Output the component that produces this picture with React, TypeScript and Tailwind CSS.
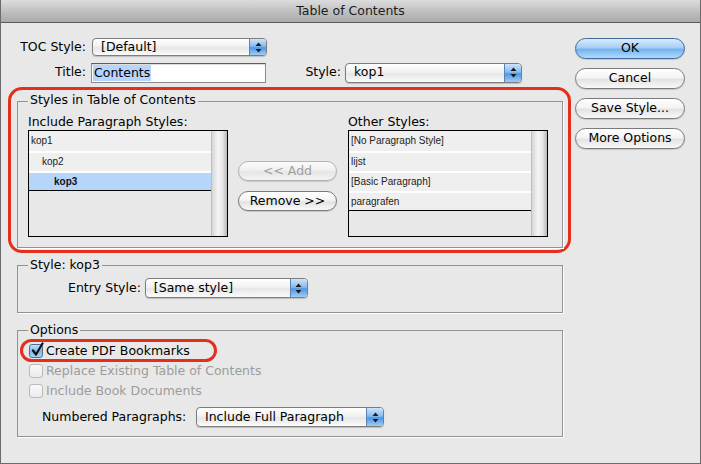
import React from "react";

function Arrows() {
  return (
    <svg width="7" height="11" viewBox="0 0 7 11">
      <path d="M3.5 0.5 L6.5 4 L0.5 4 Z" fill="#1b1b1b" />
      <path d="M3.5 10.5 L6.5 7 L0.5 7 Z" fill="#1b1b1b" />
    </svg>
  );
}

function Select({ className, text }: { className: string; text: string }) {
  return (
    <div
      className={`flex shrink-0 overflow-hidden rounded-[4px] border border-[#7d7d7d] bg-[linear-gradient(to_bottom,#ffffff,#f1f1f1_45%,#e6e6e6_55%,#fbfbfb)] shadow-[0_1px_1px_rgba(0,0,0,0.18)] ${className}`}
    >
      <div className="flex flex-1 items-center pl-[8px] text-[12.5px] leading-none text-black">{text}</div>
      <div className="flex w-[17px] items-center justify-center border-l border-[#5c82b4] bg-[linear-gradient(to_bottom,#cfe4fa,#86bbf0_45%,#4f97e4_55%,#9fcdf8)]">
        <Arrows />
      </div>
    </div>
  );
}

function AquaButton({
  children,
  primary,
  disabled,
  className,
}: {
  children: React.ReactNode;
  primary?: boolean;
  disabled?: boolean;
  className: string;
}) {
  const look = primary
    ? "border-[#3e6aa0] bg-[linear-gradient(to_bottom,#d8ebfc,#a6cff6_45%,#74b3ef_55%,#b2dafb)] text-black"
    : disabled
    ? "border-[#b3b3b3] bg-[linear-gradient(to_bottom,#fbfbfb,#f0f0f0_45%,#e6e6e6_55%,#f4f4f4)] text-[#a0a0a0]"
    : "border-[#7a7a7a] bg-[linear-gradient(to_bottom,#ffffff,#f4f4f4_45%,#e3e3e3_55%,#f8f8f8)] text-black";
  return (
    <div
      className={`flex items-center justify-center rounded-full border text-[12.5px] leading-none shadow-[0_1px_1px_rgba(0,0,0,0.15)] ${look} ${className}`}
    >
      {children}
    </div>
  );
}

function CheckBox({ checked, disabled }: { checked?: boolean; disabled?: boolean }) {
  if (checked) {
    return (
      <div className="relative h-[14px] w-[14px] shrink-0 rounded-[3px] border border-[#4f6f9a] bg-[linear-gradient(to_bottom,#c9e0f8,#7fb5ec_50%,#a9d1f7)]">
        <svg className="absolute left-[1px] top-[-3px]" width="13" height="15" viewBox="0 0 13 15">
          <path d="M2 8.5 L5 12.5 L11.5 1.5" fill="none" stroke="#111" strokeWidth="2.2" strokeLinecap="round" strokeLinejoin="round" />
        </svg>
      </div>
    );
  }
  return (
    <div
      className={`h-[14px] w-[14px] shrink-0 rounded-[3px] border ${
        disabled ? "border-[#bababa] bg-[linear-gradient(to_bottom,#f9f9f9,#ebebeb)]" : "border-[#8a8a8a] bg-white"
      }`}
    />
  );
}

function ListBox({
  items,
}: {
  items: { text: string; indent: string; selected?: boolean }[];
}) {
  return (
    <div className="flex h-[107px] w-[200px] border border-black">
      <div className="flex flex-1 flex-col">
        {items.map((it, i) => {
          const first = i === 0;
          const last = i === items.length - 1;
          return (
            <div
              key={it.text}
              className={`flex h-[20px] shrink-0 items-center text-[10px] leading-none font-['Liberation_Sans',sans-serif] ${it.indent} ${
                first ? "" : "border-t-2 border-t-white"
              } ${last ? "border-b border-b-black" : ""} ${
                it.selected ? "bg-[#b6d5fb] font-bold text-[#111]" : "bg-[#efefef] text-[#222]"
              }`}
            >
              {it.text}
            </div>
          );
        })}
      </div>
      <div className="w-[16px] border-l border-[#bdbdbd] bg-[linear-gradient(to_right,#d6d6d6,#f4f4f4_40%,#e6e6e6_70%,#b9b9b9)]" />
    </div>
  );
}

function Group({
  title,
  className,
  legendClass,
  children,
}: {
  title: string;
  className: string;
  legendClass?: string;
  children: React.ReactNode;
}) {
  return (
    <fieldset
      className={`shrink-0 border border-[#929292] px-[10px] shadow-[1px_1px_0_#ffffff] ${className}`}
    >
      <legend className={`px-[2px] text-[12.5px] leading-[14px] text-black ${legendClass ?? ""}`}>{title}</legend>
      {children}
    </fieldset>
  );
}

export default function App() {
  return (
    <div className="flex h-[464px] w-[701px] flex-col border-x border-b border-[#6a6a6a] bg-[#e8e8e8] font-['DejaVu_Sans',sans-serif] text-black">
      {/* title bar */}
      <div className="flex h-[23px] shrink-0 items-center justify-center border-b border-[#5a5a5a] bg-[linear-gradient(to_bottom,#dcdcdc,#bcbcbc_60%,#aaaaaa)] text-[12.5px] text-[#1c1c1c]">
        Table of Contents
      </div>

      <div className="flex flex-1">
        {/* left column */}
        <div className="flex w-[574px] shrink-0 flex-col">
          {/* TOC Style row */}
          <div className="mt-[15px] flex h-[18px] items-center text-[12.5px]">
            <div className="w-[85px] text-right">TOC Style:</div>
            <Select className="ml-[6px] h-[18px] w-[175px]" text="[Default]" />
          </div>
          {/* Title row */}
          <div className="mt-[6px] flex h-[21px] items-center text-[12.5px]">
            <div className="w-[85px] text-right">Title:</div>
            <div className="ml-[5px] flex h-[20px] w-[175px] items-center border border-[#8c8c8c] border-t-[#5f5f5f] bg-white pl-[1px] shadow-[inset_0_1px_1px_rgba(0,0,0,0.15)]">
              <span className="bg-[#b5d5fe] px-[1px] leading-[16px]">Contents</span>
            </div>
            <div className="w-[75px] text-right">Style:</div>
            <Select className="ml-[4px] h-[20px] w-[177px]" text="kop1" />
          </div>

          {/* red highlight around Styles group */}
          <div className="ml-[7px] mt-[4px] h-[166px] w-[563px] shrink-0 rounded-[14px] border-[3px] border-[#e2301d] pl-[6px] pt-[3px]">
            <Group
              title="Styles in Table of Contents"
              legendClass="pb-[2px]"
              className="h-[155px] w-[546px] pt-[5px]"
            >
              <div className="flex">
                <div className="flex flex-col">
                  <div className="h-[16px] text-[12.5px] leading-[16px]">Include Paragraph Styles:</div>
                  <ListBox
                    items={[
                      { text: "kop1", indent: "pl-[2px]" },
                      { text: "kop2", indent: "pl-[13px]" },
                      { text: "kop3", indent: "pl-[25px]", selected: true },
                    ]}
                  />
                </div>
                <div className="ml-[10px] flex w-[99px] flex-col gap-[10px] pt-[47px]">
                  <AquaButton disabled className="h-[20px] w-[99px]">
                    &lt;&lt; Add
                  </AquaButton>
                  <AquaButton className="h-[20px] w-[99px]">Remove &gt;&gt;</AquaButton>
                </div>
                <div className="ml-[11px] flex flex-col">
                  <div className="h-[16px] text-[12.5px] leading-[16px]">Other Styles:</div>
                  <ListBox
                    items={[
                      { text: "[No Paragraph Style]", indent: "pl-[2px]" },
                      { text: "lijst", indent: "pl-[2px]" },
                      { text: "[Basic Paragraph]", indent: "pl-[2px]" },
                      { text: "paragrafen", indent: "pl-[2px]" },
                    ]}
                  />
                </div>
              </div>
            </Group>
          </div>

          {/* Style: kop3 */}
          <Group title="Style: kop3" className="ml-[16px] mt-[5px] h-[55px] w-[546px] pt-[6px]">
            <div className="flex h-[20px] items-center text-[12.5px]">
              <div className="ml-[40px]">Entry Style:</div>
              <Select className="ml-[4px] h-[20px] w-[163px]" text="[Same style]" />
            </div>
          </Group>

          {/* Options */}
          <Group title="Options" className="ml-[16px] mt-[10px] h-[114px] w-[546px] pt-[4px]">
            <div className="flex flex-col text-[12.5px]">
              <div className="relative flex h-[20px] items-center gap-[3px] pl-[1px]">
                <CheckBox checked />
                <span>Create PDF Bookmarks</span>
                <span className="pointer-events-none absolute left-[-8px] top-[-2px] h-[23px] w-[197px] rounded-full border-[3px] border-[#e2301d]" />
              </div>
              <div className="flex h-[20px] items-center gap-[3px] pl-[1px] text-[#9c9c9c]">
                <CheckBox disabled />
                <span>Replace Existing Table of Contents</span>
              </div>
              <div className="flex h-[20px] items-center gap-[3px] pl-[1px] text-[#9c9c9c]">
                <CheckBox disabled />
                <span>Include Book Documents</span>
              </div>
              <div className="mt-[6px] flex h-[20px] items-center">
                <div className="ml-[14px] w-[154px]">Numbered Paragraphs:</div>
                <Select className="h-[20px] w-[188px]" text="Include Full Paragraph" />
              </div>
            </div>
          </Group>
        </div>

        {/* right column buttons */}
        <div className="flex w-[110px] shrink-0 flex-col gap-[9px] pt-[15px]">
          <AquaButton primary className="h-[21px] w-[110px]">OK</AquaButton>
          <AquaButton className="h-[21px] w-[110px]">Cancel</AquaButton>
          <AquaButton className="h-[21px] w-[110px]">Save Style...</AquaButton>
          <AquaButton className="h-[21px] w-[110px]">More Options</AquaButton>
        </div>
      </div>
    </div>
  );
}
